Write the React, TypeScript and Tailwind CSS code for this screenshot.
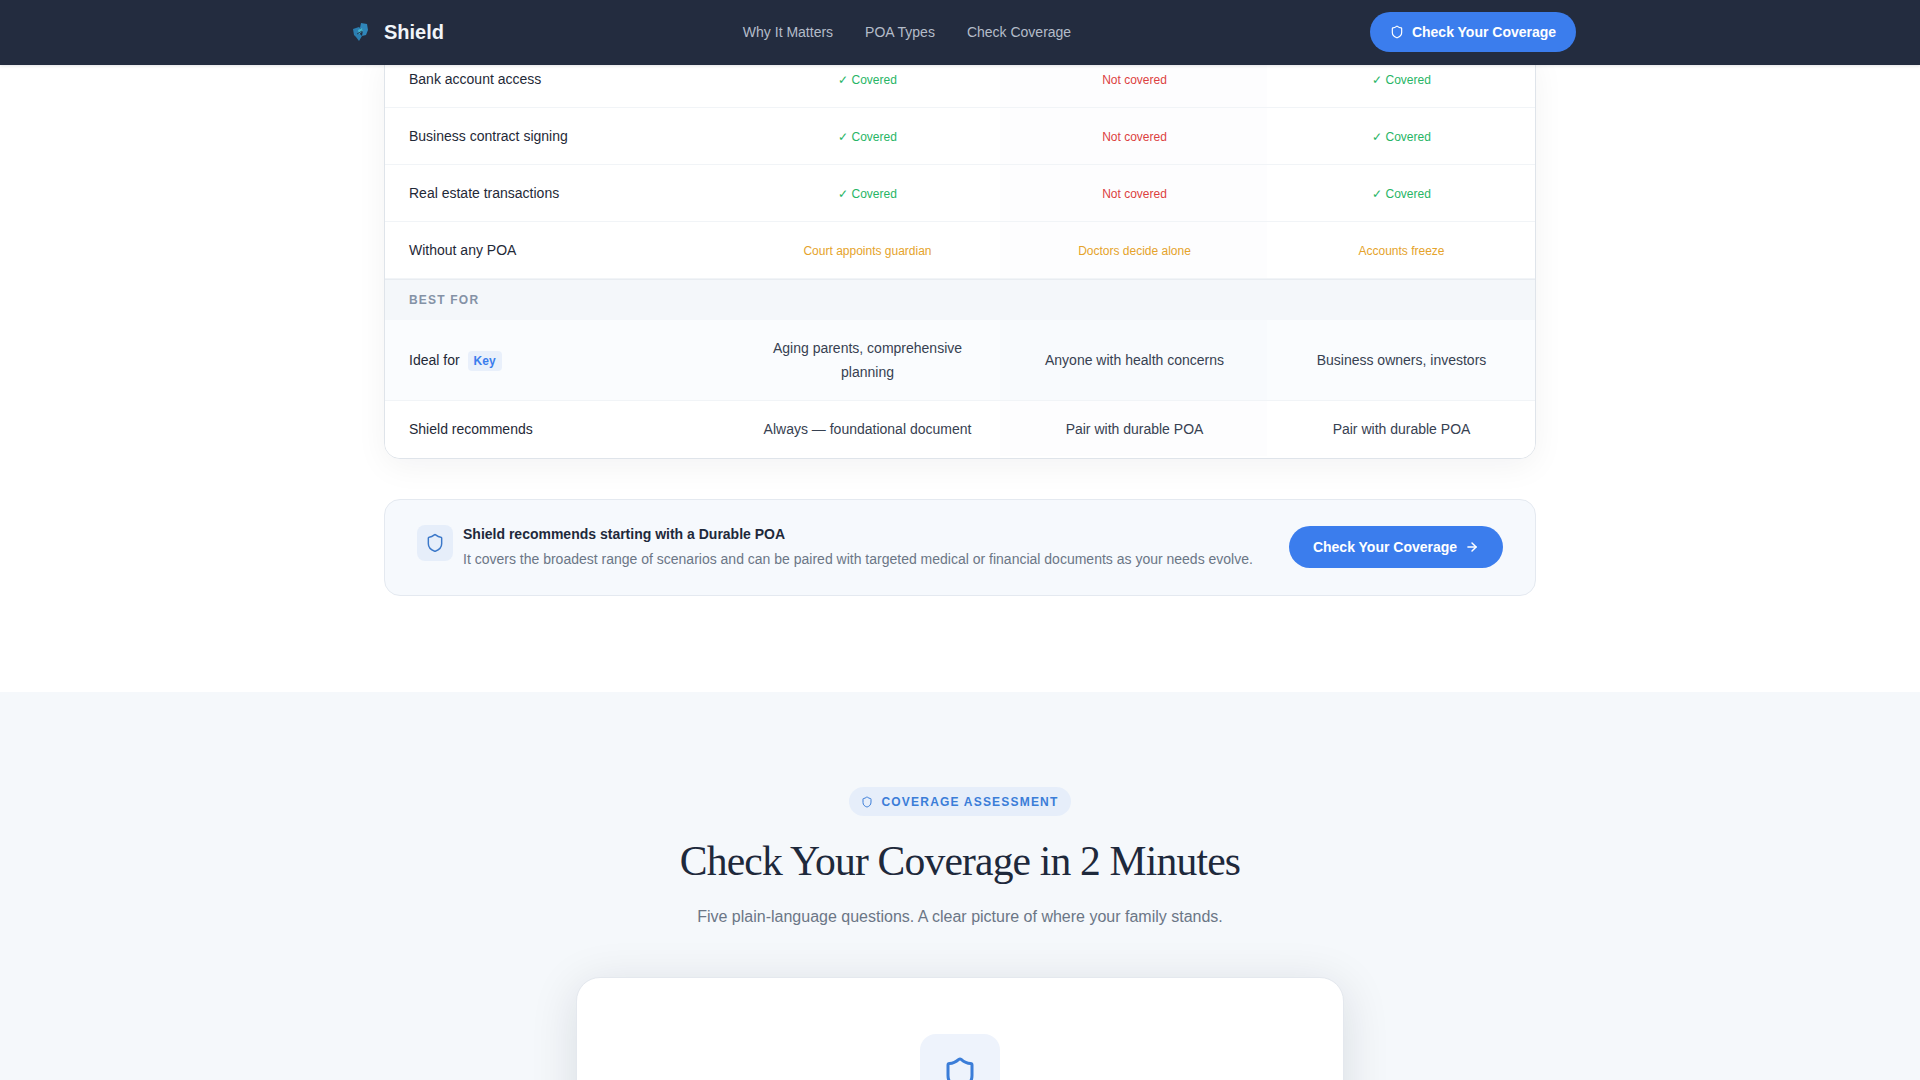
import { ArrowRight, Shield } from "lucide-react";

const SANS = "font-['Liberation_Sans',Arial,sans-serif]";

const COVERAGE_ROWS = [
  { label: "Bank account access", cells: ["yes", "no", "yes"] },
  { label: "Business contract signing", cells: ["yes", "no", "yes"] },
  { label: "Real estate transactions", cells: ["yes", "no", "yes"] },
];

const WITHOUT_POA = ["Court appoints guardian", "Doctors decide alone", "Accounts freeze"];

function Logo() {
  return (
    <svg width="17" height="20" viewBox="0 0 17 20" className="shrink-0">
      <path d="M9 1l6 1 1 6-2 5-4 1 1-6-3-2z" fill="#2f86ba" />
      <path d="M1 7l6-2 2 2-1 5 2 2-3 5-3-4-2-2z" fill="#2b7fb2" />
      <path d="M6 8l4-2 1 3-4 3z" fill="#43b4cc" />
      <path d="M5 12l5-3" stroke="#232c3f" strokeWidth="0.8" />
    </svg>
  );
}

function Nav() {
  return (
    <nav className="relative z-10 h-[65px] bg-[#232c3f] pb-px shadow-[0_1px_3px_rgba(15,23,42,0.12)]">
      <div className="mx-auto flex h-full w-[1280px] items-center justify-between px-6">
        <div className="flex items-center gap-[15px] pl-[8px]">
          <Logo />
          <span className="text-xl font-bold text-[#f1f5f9]">Shield</span>
        </div>
        <div className="flex items-center gap-8 text-sm text-[#b4bcc9]">
          <span>Why It Matters</span>
          <span>POA Types</span>
          <span>Check Coverage</span>
        </div>
        <button className="flex h-10 w-[206px] items-center justify-center gap-2 rounded-full bg-[#3b7ded] text-sm font-semibold text-white">
          <Shield size={14} strokeWidth={2} />
          Check Your Coverage
        </button>
      </div>
    </nav>
  );
}

function CoverageCell({ value }: { value: string }) {
  if (value === "yes") return <span className="mt-[2px] text-xs text-[#27b565]">✓ Covered</span>;
  return <span className="mt-[2px] text-xs text-[#dc3f3f]">Not covered</span>;
}

function TableRow({
  label,
  cells,
  tall,
  tinted,
}: {
  label: React.ReactNode;
  cells: React.ReactNode[];
  tall?: boolean;
  tinted?: boolean;
}) {
  return (
    <div
      className={`grid grid-cols-[348px_267px_267px_267px] border-b border-[#f1f4f7] last:border-b-0 last:pb-[2px] ${
        tall ? "h-[81px]" : "h-[57px]"
      } ${tinted ? "bg-[#fafcfe]" : "bg-white"}`}
    >
      <div className="flex items-center pl-6 text-sm text-[#1f2937]">{label}</div>
      {cells.map((cell, i) => (
        <div
          key={i}
          className={`flex items-center justify-center pr-6 pl-[26px] text-center text-sm leading-6 text-[#374151] ${
            i === 1 ? (tinted ? "bg-[#f8fafd]" : "bg-[#fdfdfe]") : ""
          }`}
        >
          {cell}
        </div>
      ))}
    </div>
  );
}

function ComparisonTable() {
  return (
    <div className="overflow-hidden rounded-2xl border border-[#dfe4ea] bg-white shadow-[0_8px_32px_rgba(15,23,42,0.05)]">
      {COVERAGE_ROWS.map((row) => (
        <TableRow
          key={row.label}
          label={row.label}
          cells={row.cells.map((c, i) => (
            <CoverageCell key={i} value={c} />
          ))}
        />
      ))}
      <TableRow
        label="Without any POA"
        cells={WITHOUT_POA.map((text) => (
          <span key={text} className="mt-[2px] text-xs text-[#e5a32b]">
            {text}
          </span>
        ))}
      />
      <div className="flex h-[41px] items-center border-t border-[#e8ecf1] bg-[#f4f7fa] pl-6 text-xs font-bold tracking-[0.1em] text-[#8492a6]">
        BEST FOR
      </div>
      <TableRow
        tall
        tinted
        label={
          <>
            Ideal for
            <span className="mt-[2px] ml-2 rounded bg-[#e9f0fb] px-1.5 py-0.5 text-xs font-bold text-[#3b7ded]">Key</span>
          </>
        }
        cells={["Aging parents, comprehensive planning", "Anyone with health concerns", "Business owners, investors"]}
      />
      <TableRow
        label="Shield recommends"
        cells={["Always — foundational document", "Pair with durable POA", "Pair with durable POA"]}
      />
    </div>
  );
}

function Recommendation() {
  return (
    <div className="mt-10 flex h-[97px] items-center justify-between rounded-2xl border border-[#e4e9f0] bg-[#f6f9fd] pl-8 pr-8">
      <div className="flex items-start gap-[10px]">
        <div className="mt-px flex h-9 w-9 items-center justify-center rounded-lg bg-[#e6eefa] pr-px text-[#3b78c9]">
          <Shield size={20} strokeWidth={1.75} />
        </div>
        <div>
          <p className="text-sm leading-5 font-semibold text-[#1e293b]">Shield recommends starting with a Durable POA</p>
          <p className="mt-[3px] text-sm leading-6 text-[#6b7686]">
            It covers the broadest range of scenarios and can be paired with targeted medical or financial documents as
            your needs evolve.
          </p>
        </div>
      </div>
      <button className="mb-px flex h-[42px] w-[214px] items-center justify-center gap-2 rounded-full bg-[#3b7ded] text-sm font-semibold text-white">
        Check Your Coverage
        <ArrowRight size={14} strokeWidth={2.5} />
      </button>
    </div>
  );
}

function Assessment() {
  return (
    <section className="flex flex-col items-center bg-[#f5f8fb] pt-[95px]">
      <div className="flex h-[29px] items-center gap-2 rounded-full bg-[#e6eefa] px-3 text-xs font-bold tracking-[0.1em] text-[#3b7dd8]">
        <Shield size={12} strokeWidth={2} />
        COVERAGE ASSESSMENT
      </div>
      <h2 className="mt-5 font-['Liberation_Serif',serif] text-[41.6px] leading-[50px] font-normal tracking-[-0.02em] text-[#1e293b]">
        Check Your Coverage in 2 Minutes
      </h2>
      <p className="mt-[19px] text-base leading-6 text-[#6b7686]">
        Five plain-language questions. A clear picture of where your family stands.
      </p>
      <div className="mt-[48px] flex h-[400px] w-[768px] justify-center rounded-3xl border border-[#e4e8ee] bg-white pt-14 shadow-[0_8px_48px_rgba(15,23,42,0.12)]">
        <div className="flex h-20 w-20 items-center justify-center rounded-2xl bg-[#eef3fc] text-[#3b7dd8]">
          <Shield size={36} strokeWidth={2} />
        </div>
      </div>
    </section>
  );
}

export default function App() {
  return (
    <div className={`h-screen overflow-hidden bg-white ${SANS}`}>
      <Nav />
      <main className="-mt-[15px]">
        <section className="pb-24">
          <div className="mx-auto w-[1152px]">
            <ComparisonTable />
            <Recommendation />
          </div>
        </section>
        <Assessment />
      </main>
    </div>
  );
}
